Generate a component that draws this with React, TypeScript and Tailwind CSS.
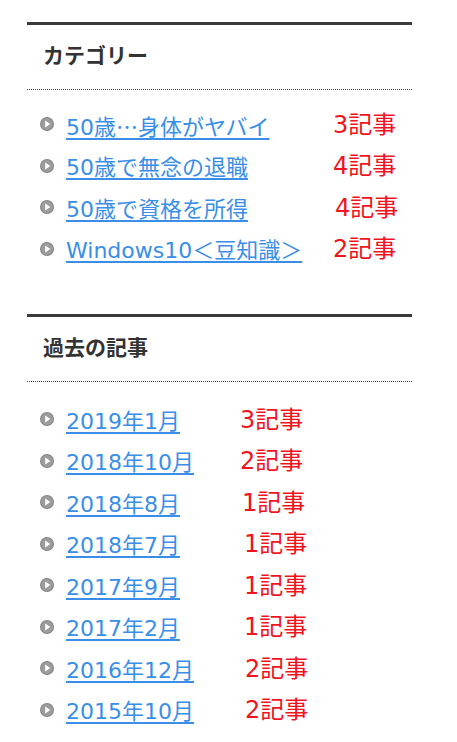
import React from 'react';

type Item = { label: React.ReactNode; key: string; count: string; pad: string };

const cjk = '"Noto Sans CJK JP", sans-serif';

const categories: Item[] = [
    { key: 'a', label: <>50歳<span style={{ fontFamily: cjk }}>…</span>身体がヤバイ</>, count: '3記事', pad: 'pl-0' },
    { key: 'b', label: '50歳で無念の退職', count: '4記事', pad: 'pl-0' },
    { key: 'c', label: '50歳で資格を所得', count: '4記事', pad: 'pl-[2px]' },
    { key: 'd', label: 'Windows10＜豆知識＞', count: '2記事', pad: 'pl-0' },
];

const archives: Item[] = [
    { key: '1', label: '2019年1月', count: '3記事', pad: 'pl-0' },
    { key: '2', label: '2018年10月', count: '2記事', pad: 'pl-0' },
    { key: '3', label: '2018年8月', count: '1記事', pad: 'pl-[2px]' },
    { key: '4', label: '2018年7月', count: '1記事', pad: 'pl-[4px]' },
    { key: '5', label: '2017年9月', count: '1記事', pad: 'pl-[4px]' },
    { key: '6', label: '2017年2月', count: '1記事', pad: 'pl-[4px]' },
    { key: '7', label: '2016年12月', count: '2記事', pad: 'pl-[5px]' },
    { key: '8', label: '2015年10月', count: '2記事', pad: 'pl-[5px]' },
];

const Bullet = () => (
    <svg width="14" height="14" viewBox="0 0 14 14" className="shrink-0 -mt-[5px]">
        <circle cx="7" cy="7" r="7" fill="#858585" />
        <circle cx="7" cy="7" r="6" fill="#9c9c9c" />
        <path d="M5.2 3.6 L10.3 7 L5.2 10.4 Z" fill="#ffffff" />
    </svg>
);

const Widget: React.FC<{ title: string; items: Item[]; labelWidth: string; listPad: string; className?: string }> = ({ title, items, labelWidth, listPad, className }) => (
    <section className={`border-t-[3px] border-[#3a3a3a] ${className ?? ''}`}>
        <h2 className="pl-4 pt-[16px] pb-[18px] text-[21px] leading-[30px] font-bold text-[#333] border-b border-dotted border-[#444]">
            {title}
        </h2>
        <ul className={`${listPad} pl-[13px]`}>
            {items.map((item) => (
                <li key={item.key} className="flex items-center h-[41.5px]">
                    <Bullet />
                    <div className={`ml-[12px] ${labelWidth} shrink-0`}>
                        <a href="#" className="text-[22px] leading-[28px] text-[#3a8ee8] underline decoration-[1.5px] underline-offset-[3px] whitespace-nowrap">
                            {item.label}
                        </a>
                    </div>
                    <span className={`${item.pad} -mt-[4px] text-[24px] leading-[28px] text-[#f0141e] whitespace-nowrap`}>
                        {item.count}
                    </span>
                </li>
            ))}
        </ul>
    </section>
);

export default function App() {
    return (
        <div className="w-[457px] h-[742px] bg-white overflow-hidden" style={{ fontFamily: '"DejaVu Sans", "Noto Sans CJK JP", sans-serif' }}>
            <div className="ml-[27px] w-[385px] pt-[22px]">
                <Widget title="カテゴリー" items={categories} labelWidth="w-[267px]" listPad="pt-[16px]" />
                <Widget title="過去の記事" items={archives} labelWidth="w-[174px]" listPad="pt-[19px]" className="mt-[42px]" />
            </div>
        </div>
    );
}
